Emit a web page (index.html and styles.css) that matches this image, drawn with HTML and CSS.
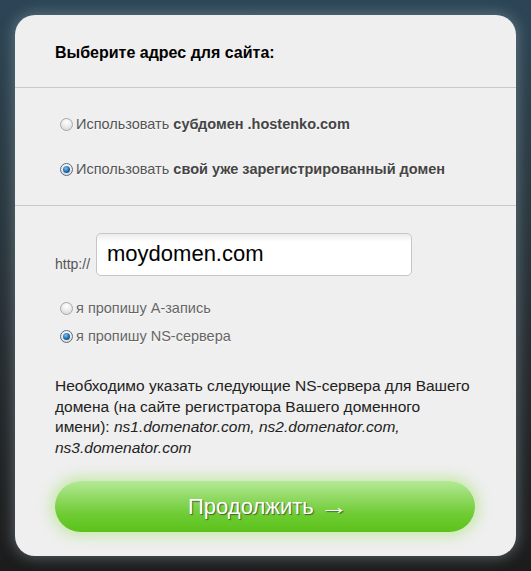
FILE: index.html
```html
<!DOCTYPE html>
<html lang="ru">
<head>
<meta charset="utf-8">
<title>Выберите адрес для сайта</title>
<link rel="stylesheet" href="styles.css">
</head>
<body>
<div class="card">
  <div class="section head">
    <h1 class="title">Выберите адрес для сайта:</h1>
  </div>
  <div class="section choices">
    <label class="radio-row big"><span class="radio"></span>Использовать <b>субдомен .hostenko.com</b></label>
    <label class="radio-row big"><span class="radio checked"></span>Использовать <b>свой уже зарегистрированный домен</b></label>
  </div>
  <div class="section domain">
    <div class="url-row">
      <span class="proto">http://</span>
      <div class="input">moydomen.com</div>
    </div>
    <div class="sub-choices">
      <label class="radio-row small"><span class="radio"></span>я пропишу А-запись</label>
      <label class="radio-row small"><span class="radio checked"></span>я пропишу NS-сервера</label>
    </div>
    <p class="note">Необходимо указать следующие NS-сервера для Вашего домена (на сайте регистратора Вашего доменного имени): <i>ns1.domenator.com, ns2.domenator.com, ns3.domenator.com</i></p>
    <button class="btn">Продолжить <span class="arrow">→</span></button>
  </div>
</div>
</body>
</html>
```

FILE: styles.css
```css
html, body {
  margin: 0;
  padding: 0;
}
body {
  width: 531px;
  height: 571px;
  box-sizing: border-box;
  padding: 15px 15px 0 15px;
  background: linear-gradient(to bottom, #2c4556 0%, #2a3840 35%, #252a2e 65%, #1c1c1c 100%);
  font-family: "Liberation Sans", Arial, sans-serif;
  overflow: hidden;
}
.card {
  width: 501px;
  height: 541px;
  box-sizing: border-box;
  background: #efefef;
  border-radius: 20px;
  box-shadow: 0 0 14px 2px rgba(150, 170, 180, 0.45);
  overflow: hidden;
}
.section {
  padding-left: 40px;
  padding-right: 40px;
}
.head {
  padding-top: 29px;
  padding-bottom: 25px;
  border-bottom: 1px solid #c9c9c9;
}
.title {
  margin: 0;
  font-size: 16px;
  line-height: 18px;
  font-weight: bold;
  color: #000;
}
.choices {
  padding-top: 27px;
  padding-bottom: 27px;
  display: flex;
  flex-direction: column;
  gap: 27px;
  border-bottom: 1px solid #c9c9c9;
}
.radio-row {
  display: flex;
  align-items: center;
  padding-left: 5px;
  color: #555;
  white-space: pre;
  font-size: 14.5px;
  line-height: 18px;
  text-shadow: 0 1px 0 rgba(255, 255, 255, 0.8);
}
.radio-row.big b {
  color: #444;
}
.radio-row.small {
  color: #666;
}
.radio {
  display: inline-block;
  width: 11px;
  height: 11px;
  border-radius: 50%;
  border: 1px solid #a8a8a8;
  background: radial-gradient(circle at 50% 30%, #ffffff 0%, #e6e6e6 60%, #cfcfcf 100%);
  margin-right: 3px;
  position: relative;
  flex: none;
}
.radio.checked {
  border-color: #5a6d80;
}
.radio.checked::after {
  content: "";
  position: absolute;
  left: 2px;
  top: 2px;
  width: 7px;
  height: 7px;
  border-radius: 50%;
  background: radial-gradient(circle at 40% 35%, #7fc0f0 0%, #1f66a8 55%, #0d3a66 100%);
}
.domain {
  padding-top: 27px;
  padding-right: 20px;
}
.url-row {
  display: flex;
  align-items: flex-end;
  gap: 6px;
}
.proto {
  font-size: 14px;
  color: #555;
  line-height: 16px;
  padding-bottom: 4px;
}
.input {
  width: 316px;
  height: 43px;
  box-sizing: border-box;
  border: 1px solid #c6c6c6;
  border-radius: 5px;
  background: linear-gradient(to bottom, #ececec 0px, #ffffff 8px, #ffffff 100%);
  font-size: 22px;
  line-height: 40px;
  padding-left: 10px;
  color: #000;
}
.sub-choices {
  margin-top: 23px;
  display: flex;
  flex-direction: column;
  gap: 10px;
}
.note {
  width: 418px;
  margin: 31px 0 0 0;
  font-size: 15.5px;
  line-height: 20.5px;
  color: #222;
}
.note i {
  font-style: italic;
}
.btn {
  display: block;
  margin-top: 23px;
  width: 420px;
  height: 51px;
  border: none;
  border-radius: 26px;
  background: linear-gradient(to bottom, #b4e996 0%, #8ed860 35%, #6fcc34 65%, #5bc21a 100%);
  box-shadow: 0 0 12px 5px rgba(170, 230, 120, 0.5);
  color: #fff;
  font-family: "Liberation Sans", Arial, sans-serif;
  font-size: 22px;
  text-shadow: 1px 1px 1px rgba(40, 60, 30, 0.7);
  cursor: pointer;
}
.arrow {
  display: inline-block;
  transform: scaleX(1.3);
  transform-origin: left center;
}
```
